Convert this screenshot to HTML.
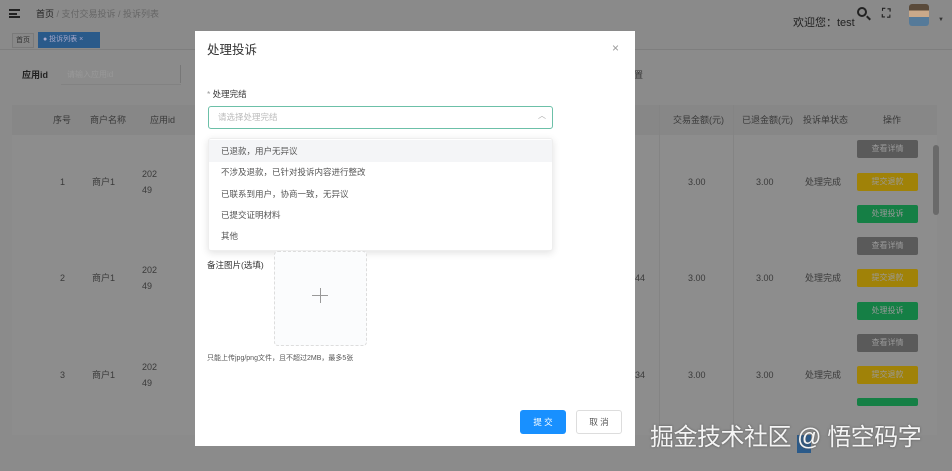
<!DOCTYPE html>
<html><head><meta charset="utf-8"><style>
*{margin:0;padding:0;box-sizing:border-box}
body{width:952px;height:471px;overflow:hidden;background:#8b8b8b;font-family:"Liberation Sans","Noto Sans CJK SC",sans-serif;position:relative;color:#333}
.a{position:absolute;white-space:nowrap;line-height:1.2}
.t{font-size:9px;color:#3a3a3a}
.btn{position:absolute;width:61px;height:18px;border-radius:2px;font-size:8px;color:#9a9a9a;text-align:center;line-height:18px}
</style></head><body>
<div class="a" style="left:0;top:0;width:952px;height:50px;background:#8a8a8a;border-bottom:1px solid #7e7e7e"></div>
<div class="a" style="left:9px;top:9px;width:11px;height:9px;border-top:2px solid #222;border-bottom:2px solid #222"></div>
<div class="a" style="left:9px;top:13px;width:8px;height:2px;background:#222"></div>
<div class="a t" style="left:36px;top:9px;color:#222">首页 <span style="color:#666">/ 支付交易投诉 / 投诉列表</span></div>
<div class="a" style="left:12px;top:33px;width:22px;height:15px;background:#888;border:1px solid #7a7a7a;font-size:7px;color:#333;text-align:center;line-height:13px">首页</div>
<div class="a" style="left:38px;top:32px;width:62px;height:16px;background:#2a5a8a;font-size:7px;color:#aac;line-height:16px;padding-left:5px">● 投诉列表 ×</div>
<div class="a" style="left:793px;top:17px;font-size:11px;color:#222">欢迎您：test</div>
<div class="a" style="left:857px;top:7px;width:10px;height:10px;border:2px solid #222;border-radius:50%"></div>
<div class="a" style="left:866px;top:17px;width:5px;height:2px;background:#222;transform:rotate(45deg)"></div>
<div class="a" style="left:882px;top:6px;font-size:12px;color:#222;font-weight:bold">⛶</div>
<div class="a" style="left:909px;top:4px;width:20px;height:22px;background:linear-gradient(#5a4a3a 30%,#c9a98a 30%,#c9a98a 60%,#557a99 60%);border-radius:3px"></div>
<div class="a" style="left:938px;top:17px;font-size:6px;color:#333">▼</div>
<div class="a t" style="left:22px;top:70px;color:#222;font-weight:bold">应用id</div>
<div class="a" style="left:61px;top:65px;width:120px;height:20px;border-bottom:1px solid #828282;font-size:8px;color:#999;padding:5px 6px">请输入应用id</div>
<div class="a" style="left:180px;top:65px;width:1px;height:18px;background:#777"></div>
<div class="a t" style="left:625px;top:70px;color:#333">重置</div>
<div class="a" style="left:12px;top:105px;width:925px;height:330px;background:#8d8d8d"></div>
<div class="a" style="left:12px;top:105px;width:925px;height:30px;background:#878787"></div>
<div class="a t" style="left:53px;top:115px">序号</div>
<div class="a t" style="left:90px;top:115px">商户名称</div>
<div class="a t" style="left:150px;top:115px">应用id</div>
<div class="a t" style="left:673px;top:115px">交易金额(元)</div>
<div class="a t" style="left:742px;top:115px">已退金额(元)</div>
<div class="a t" style="left:803px;top:115px">投诉单状态</div>
<div class="a t" style="left:883px;top:115px">操作</div>
<div class="a" style="left:659px;top:105px;width:1px;height:330px;background:#848484"></div>
<div class="a" style="left:733px;top:105px;width:1px;height:330px;background:#848484"></div>
<div class="a" style="left:933px;top:145px;width:6px;height:70px;background:#6a6a6a;border-radius:3px"></div>
<div class="a t" style="left:60px;top:177px">1</div><div class="a t" style="left:92px;top:177px">商户1</div>
<div class="a t" style="left:142px;top:166px;line-height:16px">202<br>49</div>
<div class="a t" style="left:620px;top:177px">19</div><div class="a t" style="left:688px;top:177px">3.00</div><div class="a t" style="left:756px;top:177px">3.00</div><div class="a t" style="left:805px;top:177px">处理完成</div>
<div class="a t" style="left:60px;top:273px">2</div><div class="a t" style="left:92px;top:273px">商户1</div>
<div class="a t" style="left:142px;top:262px;line-height:16px">202<br>49</div>
<div class="a t" style="left:635px;top:273px">44</div><div class="a t" style="left:688px;top:273px">3.00</div><div class="a t" style="left:756px;top:273px">3.00</div><div class="a t" style="left:805px;top:273px">处理完成</div>
<div class="a t" style="left:60px;top:370px">3</div><div class="a t" style="left:92px;top:370px">商户1</div>
<div class="a t" style="left:142px;top:359px;line-height:16px">202<br>49</div>
<div class="a t" style="left:635px;top:370px">34</div><div class="a t" style="left:688px;top:370px">3.00</div><div class="a t" style="left:756px;top:370px">3.00</div><div class="a t" style="left:805px;top:370px">处理完成</div>
<div class="btn" style="left:857px;top:140px;background:#5a5a5a">查看详情</div>
<div class="btn" style="left:857px;top:173px;background:#a08208">提交退款</div>
<div class="btn" style="left:857px;top:205px;background:#157f45">处理投诉</div>
<div class="btn" style="left:857px;top:237px;background:#5a5a5a">查看详情</div>
<div class="btn" style="left:857px;top:269px;background:#a08208">提交退款</div>
<div class="btn" style="left:857px;top:302px;background:#157f45">处理投诉</div>
<div class="btn" style="left:857px;top:334px;background:#5a5a5a">查看详情</div>
<div class="btn" style="left:857px;top:366px;background:#a08208">提交退款</div>
<div class="btn" style="left:857px;top:398px;background:#157f45;height:8px"></div>
<div class="a" style="left:195px;top:31px;width:440px;height:415px;background:#fff"></div>
<div class="a" style="left:207px;top:43px;font-size:12.5px;color:#333">处理投诉</div>
<div class="a" style="left:612px;top:41px;font-size:12px;color:#999">×</div>
<div class="a" style="left:207px;top:89px;font-size:8.5px;color:#333"><span style="color:#999">*</span> 处理完结</div>
<div class="a" style="left:208px;top:106px;width:345px;height:23px;border:1px solid #6cc0a8;border-radius:3px;font-size:8.5px;color:#bbb;padding:5px 9px">请选择处理完结</div>
<div class="a" style="left:538px;top:111px;font-size:8px;color:#aaa">︿</div>
<div class="a" style="left:208px;top:138px;width:345px;height:113px;background:#fff;box-shadow:0 2px 8px rgba(0,0,0,.12);border:1px solid #eee;border-radius:3px"></div>
<div class="a" style="left:209px;top:140px;width:343px;height:22px;background:#f4f5f7"></div>
<div class="a" style="left:221px;top:146px;font-size:8.5px;color:#555">已退款，用户无异议</div>
<div class="a" style="left:221px;top:167px;font-size:8.5px;color:#555">不涉及退款，已针对投诉内容进行整改</div>
<div class="a" style="left:221px;top:189px;font-size:8.5px;color:#555">已联系到用户，协商一致，无异议</div>
<div class="a" style="left:221px;top:210px;font-size:8.5px;color:#555">已提交证明材料</div>
<div class="a" style="left:221px;top:231px;font-size:8.5px;color:#555">其他</div>
<div class="a" style="left:207px;top:260px;font-size:8.5px;color:#333">备注图片(选填)</div>
<div class="a" style="left:274px;top:251px;width:93px;height:95px;border:1px dashed #ddd;border-radius:4px;background:#fbfcfd"></div>
<div class="a" style="left:312px;top:295px;width:16px;height:1px;background:#999"></div>
<div class="a" style="left:320px;top:288px;width:1px;height:15px;background:#999"></div>
<div class="a" style="left:207px;top:355px;font-size:7px;color:#555">只能上传jpg/png文件，且不超过2MB，最多5张</div>
<div class="a" style="left:520px;top:410px;width:46px;height:24px;background:#1890ff;border-radius:3px;color:#fff;font-size:8.5px;text-align:center;line-height:24px">提 交</div>
<div class="a" style="left:576px;top:410px;width:46px;height:24px;border:1px solid #ddd;border-radius:3px;color:#555;font-size:8.5px;text-align:center;line-height:22px">取 消</div>
<div class="a" style="left:797px;top:435px;width:14px;height:18px;background:#2a5a8a"></div>
<div class="a" style="left:650px;top:424px;font-size:24px;color:#f4f4f4;text-shadow:0 0 2px #555;letter-spacing:-0.5px">掘金技术社区 @ 悟空码字</div>
</body></html>
